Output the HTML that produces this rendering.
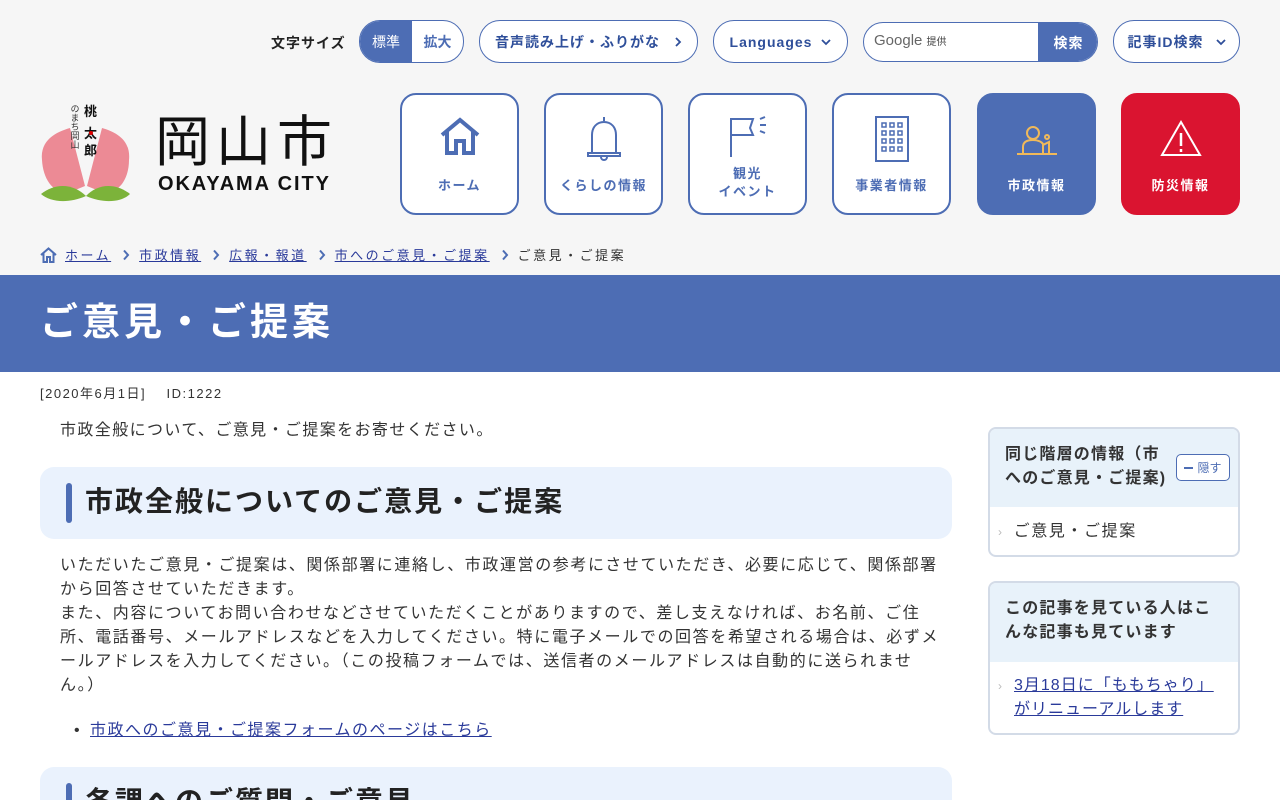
<!DOCTYPE html>
<html lang="ja"><head><meta charset="utf-8">
<style>
*{box-sizing:border-box;margin:0;padding:0}
html,body{width:1280px;height:800px;overflow:hidden}
body{background:#fff;font-family:"Liberation Sans","Noto Sans CJK JP",sans-serif;color:#333;position:relative}
.hdr{position:absolute;left:0;top:0;width:1280px;height:275px;background:#f6f6f6}
.abs{position:absolute}
.pill{position:absolute;height:42px;border:1px solid #4d6db4;border-radius:21px;background:#fff;color:#2f4f9a;font-weight:bold;font-size:14px;display:flex;align-items:center;justify-content:center;letter-spacing:1px}
.nav{position:absolute;top:93px;width:119px;height:122px;border:2px solid #4d6db4;border-radius:16px;background:#fff;color:#4d6db4;font-size:13px;font-weight:bold;text-align:center;letter-spacing:1.5px}
.nav svg{position:absolute;left:50%;transform:translateX(-50%);top:20px}
.nav .t{position:absolute;left:0;right:0;top:84px;line-height:18px}
.bc{position:absolute;top:245px;left:40px;font-size:13px;letter-spacing:2.5px;color:#333;display:flex;align-items:center}
.bc a{color:#2a3a9a;text-decoration:underline}
.bc .s{margin:0 9px 0 11px;display:inline-block}
a{color:#2a3a9a}
.p{font-size:16px;letter-spacing:1.6px;line-height:24px}
.h2{position:absolute;left:40px;width:912px;background:#eaf2fd;border-radius:14px}
.h2 .bar{position:absolute;left:26px;width:6px;border-radius:3px;background:#4d6db4}
.side{position:absolute;left:988px;width:252px;border:2px solid #d3dbe7;border-radius:8px;overflow:hidden;background:#fff}
.side .hd{background:#e8f2fa;padding:14px 15px;font-weight:bold;font-size:16px;line-height:24px;letter-spacing:1.2px;color:#333}
</style></head><body>
<div class="hdr"></div>
<div class="abs" style="left:271px;top:33px;font-size:14px;font-weight:bold;letter-spacing:1px;color:#222">文字サイズ</div>
<div class="abs" style="left:359px;top:20px;width:105px;height:43px;border:1px solid #4d6db4;border-radius:21px;overflow:hidden;background:#fff;display:flex;font-size:14px">
<div style="width:52px;background:#4d6db4;color:#fff;display:flex;align-items:center;justify-content:center">標準</div>
<div style="flex:1;color:#4d6db4;display:flex;align-items:center;justify-content:center;font-weight:bold">拡大</div></div>
<div class="pill" style="left:479px;top:20px;width:219px;height:43px">音声読み上げ・ふりがな<svg width="8" height="10" viewBox="0 0 8 10" style="margin-left:14px" fill="none" stroke="#2f4f9a" stroke-width="1.8"><path d="M2 1 L6 5 L2 9"/></svg></div>
<div class="pill" style="left:713px;top:20px;width:135px;height:43px">Languages<svg width="10" height="8" viewBox="0 0 10 8" style="margin-left:9px" fill="none" stroke="#2f4f9a" stroke-width="1.8"><path d="M1 2 L5 6 L9 2"/></svg></div>
<div class="abs" style="left:863px;top:22px;width:235px;height:40px;border:1px solid #4d6db4;border-radius:20px;overflow:hidden;background:#fff">
<span class="abs" style="left:10px;top:9px;font-size:15px;color:#666">Google <span style="font-size:10px;color:#444">提供</span></span>
<div class="abs" style="left:174px;top:0;width:61px;height:40px;background:#4d6db4;color:#fff;font-weight:bold;font-size:14px;display:flex;align-items:center;justify-content:center;letter-spacing:1px">検索</div></div>
<div class="pill" style="left:1113px;top:20px;width:127px;height:43px">記事ID検索<svg width="10" height="8" viewBox="0 0 10 8" style="margin-left:12px" fill="none" stroke="#2f4f9a" stroke-width="1.8"><path d="M1 2 L5 6 L9 2"/></svg></div>

<svg class="abs" style="left:38px;top:100px" width="100" height="105" viewBox="0 0 100 105">
<path d="M4 60 C2 40 18 32 32 28 L47 86 L30 93 C14 93 5 78 4 60Z" fill="#ec8a95"/>
<path d="M91 60 C93 40 78 32 64 28 L49 86 L66 93 C82 93 91 78 91 60Z" fill="#ec8a95"/>
<path d="M3 94 C18 82 36 84 48 96 C30 104 12 102 3 94Z" fill="#7cb33a"/>
<path d="M92 94 C77 82 59 84 48 96 C66 104 84 102 92 94Z" fill="#7cb33a"/>
<text x="46" y="16" font-size="13" font-weight="bold" fill="#111" font-family="Noto Sans CJK JP">桃</text>
<text x="46" y="38" font-size="13" font-weight="bold" fill="#111" font-family="Noto Sans CJK JP">太</text>
<text x="46" y="55" font-size="13" font-weight="bold" fill="#111" font-family="Noto Sans CJK JP">郎</text>
<circle cx="53" cy="33" r="2" fill="#d00"/>
<text font-size="9" fill="#333" font-family="Noto Sans CJK JP" writing-mode="tb" x="37" y="4">のまち岡山</text>
</svg>
<div class="abs" style="left:155px;top:104px;font-size:55px;line-height:66px;letter-spacing:6px;color:#111;font-family:'Noto Sans CJK JP',sans-serif;font-weight:400">岡山市</div>
<div class="abs" style="left:158px;top:173px;font-size:20px;font-weight:bold;letter-spacing:1.9px;color:#111">OKAYAMA CITY</div>

<div class="nav" style="left:400px"><svg width="44" height="44" viewBox="0 0 44 44" fill="none" stroke="#4d6db4" stroke-width="4"><path d="M4 20 L22 5 L40 20"/><path d="M9 16 V38 H18 V26 H26 V38 H35 V16"/></svg><div class="t" style="top:82px">ホーム</div></div>
<div class="nav" style="left:544px"><svg width="44" height="50" viewBox="0 0 44 50" fill="none" stroke="#4d6db4" stroke-width="2"><path d="M22 2 V6 M10 38 V20 C10 12 15 7 22 7 C29 7 34 12 34 20 V38 M6 38 H38 V41 H6Z M19 42 C19 46 25 46 25 42"/></svg><div class="t" style="top:82px">くらしの情報</div></div>
<div class="nav" style="left:688px"><svg width="50" height="46" viewBox="0 0 50 46" fill="none" stroke="#4d6db4" stroke-width="2"><path d="M8 42 V4 H30 L27 13 L30 20 H8"/><path d="M37 4 L42 2 M37 10 H43 M37 16 L42 18"/></svg><div class="t" style="top:70px">観光<br>イベント</div></div>
<div class="nav" style="left:832px"><svg width="36" height="50" viewBox="0 0 36 50" fill="none" stroke="#4d6db4" stroke-width="2"><rect x="2" y="2" width="32" height="44"/><g stroke-width="1.5"><rect x="8" y="8" width="4" height="4"/><rect x="16" y="8" width="4" height="4"/><rect x="24" y="8" width="4" height="4"/><rect x="8" y="16" width="4" height="4"/><rect x="16" y="16" width="4" height="4"/><rect x="24" y="16" width="4" height="4"/><rect x="8" y="24" width="4" height="4"/><rect x="16" y="24" width="4" height="4"/><rect x="24" y="24" width="4" height="4"/><rect x="8" y="32" width="4" height="4"/><rect x="16" y="32" width="4" height="4"/><rect x="24" y="32" width="4" height="4"/></g></svg><div class="t" style="top:82px">事業者情報</div></div>
<div class="nav" style="left:977px;background:#4d6db4;color:#fff;border-color:#4d6db4"><svg width="44" height="40" viewBox="0 0 44 40" fill="none" stroke="#f0b95a" stroke-width="2" style="top:28px"><circle cx="18" cy="10" r="6"/><path d="M8 30 V24 C8 19 12 17 18 17 C23 17 27 19 28 21 M28 30 V22 L34 19 V30 M2 31 H42"/><circle cx="32" cy="14" r="2"/></svg><div class="t" style="top:82px">市政情報</div></div>
<div class="nav" style="left:1121px;background:#da1430;color:#fff;border-color:#da1430"><svg width="44" height="40" viewBox="0 0 44 40" fill="none" stroke="#fff" stroke-width="2" style="top:24px"><path d="M22 3 L41 36 H3Z"/><path d="M22 14 V27 M22 30 V33" stroke-width="2.5"/></svg><div class="t" style="top:82px">防災情報</div></div>

<div class="bc"><svg width="17" height="16" viewBox="0 0 17 16" fill="none" stroke="#4d6db4" stroke-width="2" style="margin-right:8px"><path d="M1 8 L8.5 1.5 L16 8 M3.5 6 V15 H7 V10 H10 V15 H13.5 V6"/></svg><a>ホーム</a><svg class="s" width="8" height="12" viewBox="0 0 8 12" fill="none" stroke="#4d6db4" stroke-width="2"><path d="M2 1.5 L6 6 L2 10.5"/></svg><a>市政情報</a><svg class="s" width="8" height="12" viewBox="0 0 8 12" fill="none" stroke="#4d6db4" stroke-width="2"><path d="M2 1.5 L6 6 L2 10.5"/></svg><a>広報・報道</a><svg class="s" width="8" height="12" viewBox="0 0 8 12" fill="none" stroke="#4d6db4" stroke-width="2"><path d="M2 1.5 L6 6 L2 10.5"/></svg><a>市へのご意見・ご提案</a><svg class="s" width="8" height="12" viewBox="0 0 8 12" fill="none" stroke="#4d6db4" stroke-width="2"><path d="M2 1.5 L6 6 L2 10.5"/></svg>ご意見・ご提案</div>

<div class="abs" style="left:0;top:275px;width:1280px;height:97px;background:#4d6db4"></div>
<div class="abs" style="left:40px;top:296px;font-size:38px;line-height:54px;font-weight:bold;color:#fff;letter-spacing:4px">ご意見・ご提案</div>

<div class="abs" style="left:40px;top:383px;font-size:13px;letter-spacing:1.5px;color:#333;white-space:pre">[2020年6月1日]    ID:1222</div>
<div class="abs p" style="left:60px;top:419px;letter-spacing:1.4px">市政全般について、ご意見・ご提案をお寄せください。</div>

<div class="h2" style="top:467px;height:72px"><div class="bar" style="top:16px;height:40px"></div><div class="abs" style="left:45px;top:15px;font-size:28px;line-height:40px;font-weight:bold;letter-spacing:2px;color:#222">市政全般についてのご意見・ご提案</div></div>

<div class="abs p" style="left:60px;top:554px;width:882px">いただいたご意見・ご提案は、関係部署に連絡し、市政運営の参考にさせていただき、必要に応じて、関係部署から回答させていただきます。<br>また、内容についてお問い合わせなどさせていただくことがありますので、差し支えなければ、お名前、ご住所、電話番号、メールアドレスなどを入力してください。特に電子メールでの回答を希望される場合は、必ずメールアドレスを入力してください。（この投稿フォームでは、送信者のメールアドレスは自動的に送られません。）</div>
<div class="abs p" style="left:74px;top:719px;letter-spacing:1.5px">•&nbsp;&nbsp;<a style="text-decoration:underline;margin-left:-3px">市政へのご意見・ご提案フォームのページはこちら</a></div>

<div class="h2" style="top:767px;height:72px"><div class="bar" style="top:16px;height:40px"></div><div class="abs" style="left:45px;top:15px;font-size:28px;line-height:40px;font-weight:bold;letter-spacing:2px;color:#222">各課へのご質問・ご意見</div></div>

<div class="side" style="top:427px;height:130px"><div class="hd" style="height:78px;padding-right:70px">同じ階層の情報（市へのご意見・ご提案)</div>
<div class="abs" style="left:186px;top:25px;width:54px;height:27px;border:1px solid #4d6db4;border-radius:5px;background:#fff;font-size:12px;color:#4d6db4;display:flex;align-items:center;justify-content:center"><span style="display:inline-block;width:9px;height:2px;background:#4d6db4;margin-right:4px"></span>隠す</div>
<div class="p" style="padding:13px 0 0 8px;font-size:16px"><span style="color:#bbb;font-size:12px;margin-right:10px">›</span>ご意見・ご提案</div></div>

<div class="side" style="top:581px;height:154px"><div class="hd" style="height:79px">この記事を見ている人はこんな記事も見ています</div>
<div style="padding:12px 10px 0 24px;position:relative;font-size:16px;line-height:24px;letter-spacing:1px"><span style="position:absolute;left:8px;top:12px;color:#bbb;font-size:12px">›</span><a style="text-decoration:underline">3月18日に「ももちゃり」がリニューアルします</a></div></div>
</body></html>
